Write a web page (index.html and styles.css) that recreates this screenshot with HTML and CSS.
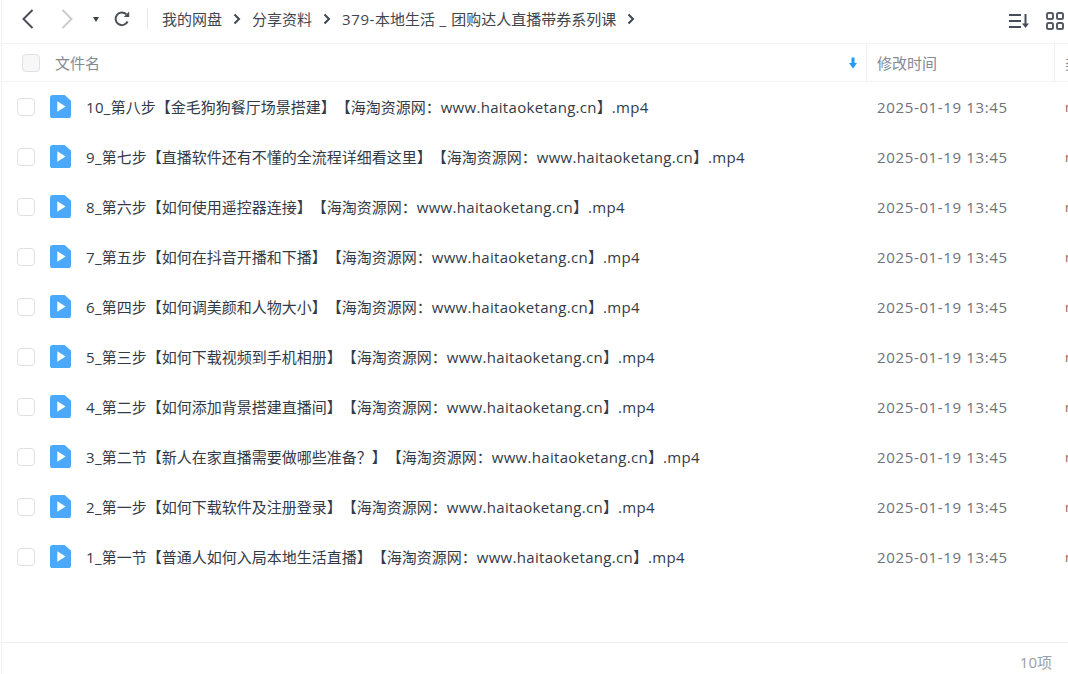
FILE: index.html
```html
<!DOCTYPE html>
<html lang="zh-CN">
  <head>
    <meta charset="UTF-8" />
    <title>我的网盘</title>
    <link rel="stylesheet" href="styles.css">
  </head>
  <body>
    <div class="app">
      <div class="toolbar">
        <svg class="nav-icon back" width="12" height="20" viewBox="0 0 12 20"><path d="M10.500 1 L1.500 10 L10.500 19" /></svg>
        <svg class="nav-icon forward" width="12" height="20" viewBox="0 0 12 20"><path d="M1.500 1 L10.500 10 L1.500 19" /></svg>
        <svg class="caret" width="8" height="7" viewBox="0 0 8 7"><path d="M1 1 H7 L4 6 Z" /></svg>
        <svg class="refresh" width="18" height="18" viewBox="0 0 18 18"><path d="M14.600 11.500 A6.300 6.300 0 1 1 13.400 4.400" /><path class="refresh-tip" d="M10.800 6.900 H16.200 V1.500 Z" /></svg>
        <div class="divider"></div>
        <div class="crumbs">
          <span>我的网盘</span>
          <svg class="crumb-sep" width="10" height="12" viewBox="0 0 10 12"><path d="M2.500 1.500 L7 6 L2.500 10.500" /></svg>
          <span>分享资料</span>
          <svg class="crumb-sep" width="10" height="12" viewBox="0 0 10 12"><path d="M2.500 1.500 L7 6 L2.500 10.500" /></svg>
          <span><b class="crumb-latin">379-</b>本地生活<b class="crumb-latin"> _ </b>团购达人直播带券系列课</span>
          <svg class="crumb-sep" width="10" height="12" viewBox="0 0 10 12"><path d="M2.500 1.500 L7 6 L2.500 10.500" /></svg>
        </div>
        <div class="toolbar-right">
          <svg class="sort-icon" width="21" height="16" viewBox="0 0 21 16"><path d="M0 2 H12 M0 8 H12 M0 14 H12" /><path d="M16.500 1 V12" /><path class="fill" d="M13 10.500 H20 L16.500 15 Z" /></svg>
          <svg class="grid-icon" width="18" height="18" viewBox="0 0 18 18"><rect x="1" y="1" width="6" height="6" rx="1.500" /><rect x="11" y="1" width="6" height="6" rx="1.500" /><rect x="1" y="11" width="6" height="6" rx="1.500" /><rect x="11" y="11" width="6" height="6" rx="1.500" /></svg>
        </div>
      </div>

      <div class="list-head">
        <div class="col-name head-name">
          <span class="checkbox head-check"></span>
          <span class="head-label">文件名</span>
          <svg class="sort-arrow" width="10" height="12" viewBox="0 0 10 12"><path d="M3.500 0.500 H6.500 V6 H9 L5 11.500 L1 6 H3.500 Z" /></svg>
        </div>
        <div class="col-date">修改时间</div>
        <div class="col-type">类型</div>
      </div>

      <div class="file-list" id="fileList"></div>

      <div class="status-bar">10项</div>
    </div>
    <script>
      const suffix = '【海淘资源网：<span class="latin">www.haitaoketang.cn</span>】<span class="latin">.mp4</span>';
      const files = [
        "10_第八步【金毛狗狗餐厅场景搭建】",
        "9_第七步【直播软件还有不懂的全流程详细看这里】",
        "8_第六步【如何使用遥控器连接】",
        "7_第五步【如何在抖音开播和下播】",
        "6_第四步【如何调美颜和人物大小】",
        "5_第三步【如何下载视频到手机相册】",
        "4_第二步【如何添加背景搭建直播间】",
        "3_第二节【新人在家直播需要做哪些准备？】",
        "2_第一步【如何下载软件及注册登录】",
        "1_第一节【普通人如何入局本地生活直播】",
      ];

      const fileList = document.getElementById("fileList");

      files.forEach((name) => {
        const title = name.replace(/^\d+_/, '<span class="latin">$&</span>');
        const row = document.createElement("div");
        row.className = "file-row";
        row.innerHTML = `
          <div class="col-name">
            <span class="checkbox"></span>
            <svg class="file-icon" width="21" height="23" viewBox="0 0 21.500 24" preserveAspectRatio="none">
              <path class="file-body" d="M3 0 H15 L21.500 6 V21 A3 3 0 0 1 18.500 24 H3 A3 3 0 0 1 0 21 V3 A3 3 0 0 1 3 0 Z" />
              <path class="file-play" d="M7.500 6.500 L16 12 L7.500 17.500 Z" />
            </svg>
            <span class="file-name">${title}${suffix}</span>
          </div>
          <div class="col-date">2025-01-19 13:45</div>
          <div class="col-type">mp4</div>`;
        fileList.appendChild(row);
      });
    </script>
  </body>
</html>
```

FILE: styles.css
```css
html,
body {
  margin: 0;
  height: 100%;
  overflow: hidden;
  background: white;
}

body {
  font-family: "Open Sans", "Noto Sans CJK SC", sans-serif;
  font-size: 15px;
  color: #424e67;
  text-spacing-trim: space-all;
}

.app {
  height: 674px;
  display: flex;
  flex-direction: column;
  border-left: 1px solid #f2f2f2;
  margin-left: 1px;
}

.toolbar {
  height: 38px;
  flex-shrink: 0;
  display: flex;
  align-items: center;
  border-bottom: 1px solid #f4f4f4;
  padding-left: 20px;
  padding-bottom: 5px;
}

.nav-icon path,
.crumb-sep path,
.refresh path {
  fill: none;
  stroke-width: 2;
}

.nav-icon.back path {
  stroke: #4a4f58;
}

.nav-icon.forward {
  margin-left: 27px;
}

.nav-icon.forward path {
  stroke: #c9ccd1;
}

.caret {
  margin-left: 19px;
  fill: #3d4149;
}

.refresh {
  margin-left: 13px;
}

.refresh path {
  stroke: #4a4f58;
}

.refresh path.refresh-tip {
  fill: #4a4f58;
  stroke: none;
}

.divider {
  width: 1px;
  height: 22px;
  background: #e8e8e8;
  margin-left: 16px;
  margin-right: 14px;
}

.crumbs {
  display: flex;
  align-items: center;
  gap: 10px;
  color: #3f4650;
}

.crumbs span {
  margin-top: -2px;
  white-space: pre;
}

.crumb-latin {
  font-weight: normal;
  letter-spacing: 0.6px;
}

.crumb-sep path {
  stroke: #3f4650;
}

.toolbar-right {
  margin-left: auto;
  display: flex;
  align-items: center;
  gap: 16px;
  padding-right: 4px;
  padding-top: 3px;
}

.sort-icon path {
  fill: none;
  stroke: #474d58;
  stroke-width: 2;
}

.sort-icon path.fill {
  fill: #474d58;
  stroke: none;
}

.grid-icon rect {
  fill: none;
  stroke: #565c66;
  stroke-width: 2;
}

.list-head {
  height: 37px;
  flex-shrink: 0;
  display: flex;
  align-items: center;
  border-bottom: 1px solid #f2f2f2;
  color: #848a94;
}

.list-head .col-date,
.list-head .col-type {
  height: 37px;
  line-height: 39px;
  border-left: 1px solid #f0f0f0;
}

.list-head .col-date {
  letter-spacing: 0;
}

.col-name {
  width: 864px;
  flex-shrink: 0;
  display: flex;
  align-items: center;
  box-sizing: border-box;
  padding-left: 15px;
}

.col-date {
  width: 188px;
  flex-shrink: 0;
  box-sizing: border-box;
  padding-left: 10px;
  white-space: nowrap;
  letter-spacing: 0.65px;
}

.col-type {
  flex: 1;
  box-sizing: border-box;
  padding-left: 10px;
  white-space: nowrap;
  overflow: hidden;
}

.checkbox {
  width: 16px;
  height: 16px;
  flex-shrink: 0;
  border: 1px solid #dfe1e5;
  border-radius: 4px;
  background: white;
}

.head-name {
  position: relative;
  height: 37px;
}

.head-check {
  margin-left: 5px;
  background: #f7f7f8;
}

.head-label {
  margin-left: 15px;
}

.sort-arrow {
  position: absolute;
  right: 8px;
  top: 13px;
  fill: #1e9bff;
}

.file-list {
  flex: 1;
}

.file-row {
  height: 50px;
  display: flex;
  align-items: center;
}

.file-icon {
  margin-left: 15px;
  margin-top: -1px;
  flex-shrink: 0;
}

.file-body {
  fill: #4aa9fb;
}

.file-play {
  fill: white;
}

.file-name {
  margin-left: 15px;
  margin-top: -2px;
  white-space: nowrap;
  color: #333a47;
}

.latin {
  letter-spacing: 0.3px;
}

.file-row .col-date {
  color: #6d727b;
  padding-left: 11px;
}

.file-row .col-type {
  color: #8a6a50;
  font-size: 13px;
  padding-left: 11px;
}

.status-bar {
  height: 31px;
  flex-shrink: 0;
  border-top: 1px solid #f0f0f0;
  text-align: right;
  padding-right: 16px;
  line-height: 39px;
  color: #9a9ea6;
}
```
